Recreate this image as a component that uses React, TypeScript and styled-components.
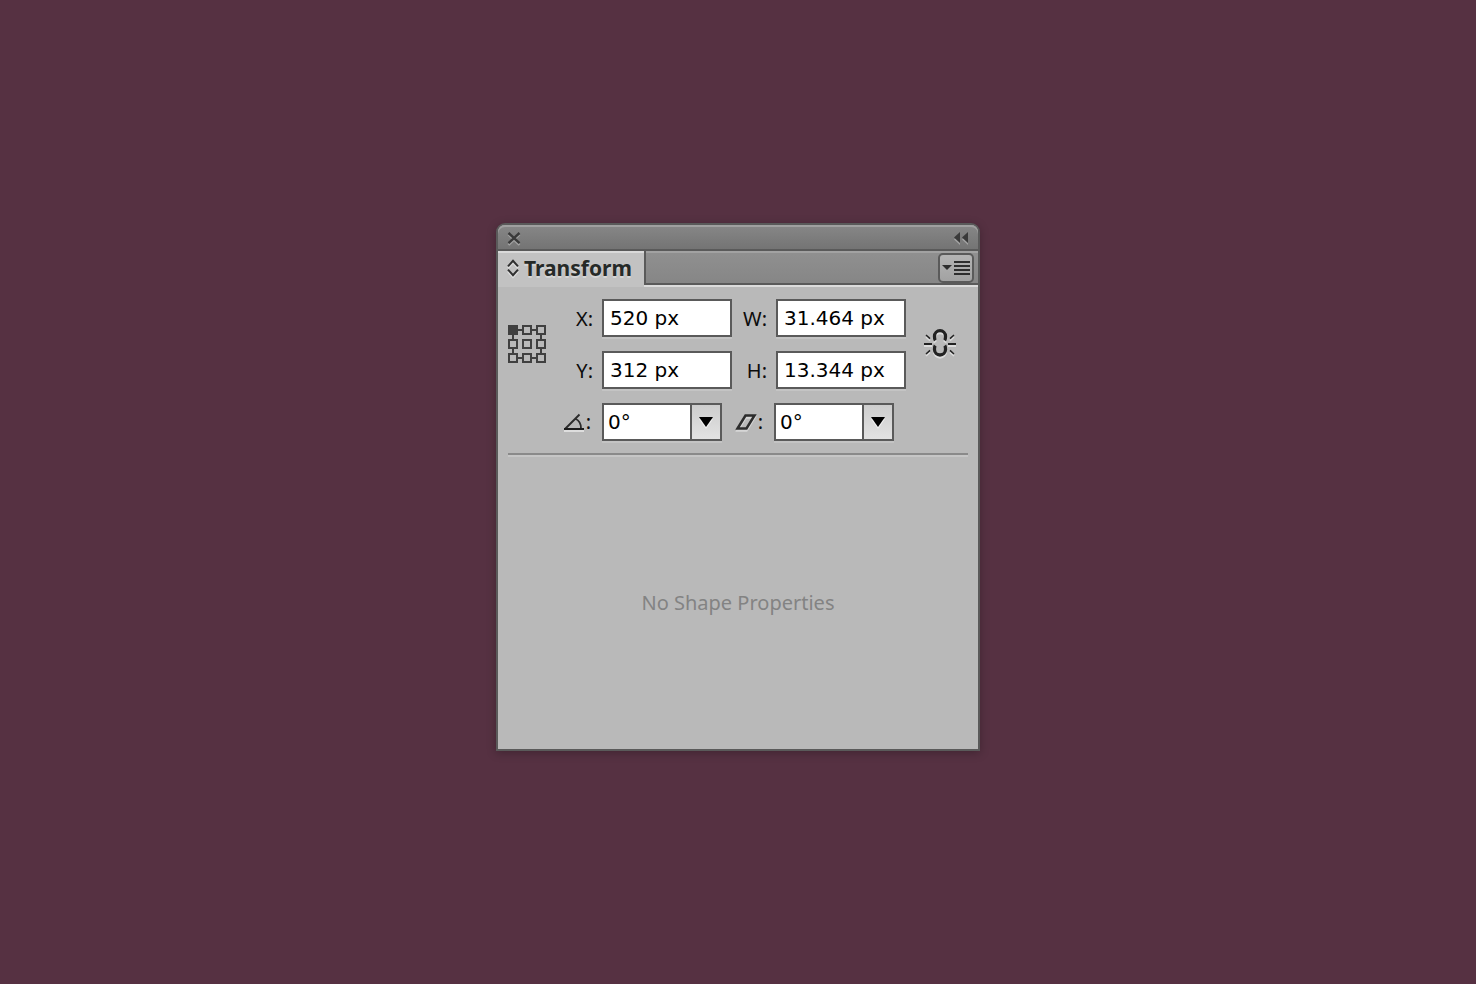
import React, { useState } from 'react';
import styled, { createGlobalStyle } from 'styled-components';

const EDGE = '#5a5a5a';
const LABEL_FONT = '"Noto Sans", "Open Sans", sans-serif';
const VALUE_FONT = '"DejaVu Sans", Verdana, sans-serif';

const GlobalStyle = createGlobalStyle`
  * { box-sizing: border-box; }
  body { margin: 0; background: #563142; }
  button, input, select { font: inherit; color: inherit; margin: 0; }
  svg { display: block; flex: none; overflow: visible; }
`;

const Stage = styled.main`
  min-height: 100vh;
  display: flex;
  align-items: center;
  justify-content: center;
  padding: 16px 16px 26px;
  font-family: ${LABEL_FONT};
  font-size: 20px;
  line-height: 24px;
  color: #0c0c0c;
`;

const Panel = styled.section`
  width: 100%;
  max-width: 484px;
  border: 2px solid ${EDGE};
  border-radius: 9px 9px 0 0;
  background: #b9b9b9;
  box-shadow: 0 2px 10px rgba(0, 0, 0, 0.25);
`;

const TitleBar = styled.header`
  display: flex;
  align-items: center;
  justify-content: space-between;
  height: 26px;
  padding: 2px 9px 0 8px;
  border-bottom: 2px solid ${EDGE};
  border-radius: 7px 7px 0 0;
  background: linear-gradient(#878787, #747474);
  box-shadow: inset 0 2px 0 #a0a0a0;
`;

const IconButton = styled.button`
  display: flex;
  padding: 0;
  border: 0;
  background: none;
  cursor: pointer;
`;

const TabBar = styled.div`
  display: flex;
  height: 36px;
`;

const Tab = styled.button`
  display: flex;
  align-items: center;
  gap: 5px;
  width: 146px;
  height: 36px;
  padding: 0 0 2px 9px;
  border: 0;
  background: #c2c2c2;
  box-shadow: inset 0 2px 0 #dadada;
  color: #262a28;
  font-size: 21px;
  font-weight: 700;
  text-shadow: 0 2px 0 #d6d6d6;
`;

const TabStrip = styled.div`
  flex: 1;
  display: flex;
  align-items: flex-end;
  justify-content: flex-end;
  height: 34px;
  padding-right: 4px;
  border-left: 2px solid ${EDGE};
  border-bottom: 2px solid ${EDGE};
  background: linear-gradient(#909090, #868686);
  box-shadow: inset 0 2px 0 #a2a2a2, 0 2px 0 #dcdcdc;
`;

const MenuButton = styled(IconButton)`
  align-items: center;
  justify-content: center;
  width: 36px;
  height: 30px;
  border: 2px solid ${EDGE};
  border-radius: 5px;
  background: linear-gradient(#b4b4b4, #a2a2a2);
`;

const Fields = styled.form`
  display: flex;
  margin: 0 10px;
  padding: 12px 0;
  border-bottom: 2px solid #8a8a8a;
  box-shadow: 0 2px 0 #c6c6c6;
`;

const SideColumn = styled.div`
  display: flex;
  align-items: center;
  height: 90px;
`;

const Rows = styled.div`
  display: flex;
  flex-direction: column;
  gap: 14px;
  margin: 0 17px 0 12px;
`;

const Row = styled.div`
  display: flex;
  align-items: center;
`;

const Label = styled.label<{ $width: number }>`
  display: flex;
  align-items: center;
  justify-content: flex-end;
  flex: none;
  width: ${(p) => p.$width}px;
  padding: 2px 9px 0 0;
`;

const IconLabel = styled(Label)`
  gap: 1px;
  padding: 0 11px 0 0;
`;

const TextBox = styled.input`
  width: 130px;
  height: 38px;
  padding: 0 6px;
  border: 2px solid ${EDGE};
  border-radius: 0;
  outline: 0;
  background: #fff;
  box-shadow: 0 2px 0 #c4c4c4;
  color: #000;
  font-family: ${VALUE_FONT};
`;

const SelectFrame = styled.div`
  position: relative;
  width: 120px;
  height: 38px;
  border: 2px solid ${EDGE};
  background: #fff;
  box-shadow: 0 2px 0 #c4c4c4;
`;

const Select = styled.select`
  appearance: none;
  display: block;
  width: 100%;
  height: 34px;
  padding: 0 32px 0 4px;
  border: 0;
  border-radius: 0;
  outline: 0;
  background: transparent;
  color: #000;
  font-family: ${VALUE_FONT};
`;

const SelectArrow = styled.span`
  position: absolute;
  top: 0;
  right: 0;
  bottom: 0;
  display: flex;
  align-items: center;
  justify-content: center;
  width: 30px;
  border-left: 2px solid ${EDGE};
  background: linear-gradient(#cdcdcd, #e2e2e2);
  pointer-events: none;
`;

const Empty = styled.p`
  display: flex;
  align-items: center;
  justify-content: center;
  min-height: 292px;
  margin: 2px 0 0;
  color: #838383;
`;

const CloseIcon = () => (
  <svg width="16" height="16" viewBox="0 0 16 16" fill="none" strokeWidth="2.4">
    <path d="M2.5 4.5 13.5 15M13.5 4.5 2.5 15" stroke="#a2a2a2" />
    <path d="M2.5 3 13.5 13.2M13.5 3 2.5 13.2" stroke="#3a3a3a" />
  </svg>
);

const CollapseIcon = () => (
  <svg width="16" height="14" viewBox="0 0 16 14">
    <path d="M7 3v11L1 8.5zM15 3v11L9 8.5z" fill="#a2a2a2" />
    <path d="M7 1v11L1 6.5zM15 1v11L9 6.5z" fill="#3a3a3a" />
  </svg>
);

const SortIcon = () => (
  <svg width="12" height="18" viewBox="0 0 12 18" fill="none" strokeWidth="2">
    <path d="M1 9.2 6 3.6l5 5.6M1 12.4 6 18l5-5.6" stroke="#dedede" />
    <path d="M1 7.4 6 1.8l5 5.6M1 10.6 6 16.2l5-5.6" stroke="#2f2f2f" />
  </svg>
);

const MenuIcon = () => (
  <svg width="28" height="16" viewBox="0 0 28 16">
    <path d="M0 5h10L5 10z" fill="#2e2e2e" />
    <path d="M12 2h16M12 6h16M12 10h16M12 14h16" stroke="#2e2e2e" strokeWidth="2" />
  </svg>
);

const points = [1, 15, 29];

const ReferenceIcon = () => (
  <svg width="38" height="38" viewBox="0 0 38 38" fill="none" stroke="#404040" strokeWidth="2">
    <path d="M10 5h4m10 0h4M10 33h4m10 0h4M5 10v4m0 10v4M33 10v4m0 10v4" />
    {points.map((y) =>
      points.map((x) => (
        <rect key={`${x}-${y}`} x={x} y={y} width="8" height="8" fill={x + y === 2 ? '#404040' : 'none'} />
      )),
    )}
  </svg>
);

const linkShape =
  'M12.2 12.5Q11.5 11.500 11.5 8.2a5.5 5.5 0 0 1 11 0Q22.500 11.500 21.8 12.5M12.2 17.500Q11.5 18.500 11.5 21.5a5.5 5.5 0 0 0 11 0Q22.500 18.500 21.8 17.500';
const linkRays = 'M3 7l4 3.6M31 7l-4 3.6M3 26l4-3.6M31 26l-4-3.6';

const LinkIcon = () => (
  <svg width="34" height="32" viewBox="0 0 34 32" fill="none">
    <g stroke="#dcdcdc" transform="translate(0 2)">
      <path d={linkShape} strokeWidth="3.3" />
      <path d={linkRays} strokeWidth="1.5" />
      <path d="M1 16h8M25 16h8" strokeWidth="2" />
    </g>
    <g stroke="#222">
      <path d={linkShape} strokeWidth="3.3" />
      <path d={linkRays} strokeWidth="1.5" />
      <path d="M1 16h8M25 16h8" strokeWidth="2" />
    </g>
  </svg>
);

const AngleIcon = () => (
  <svg width="21" height="18" viewBox="0 0 21 18" fill="none">
    <path d="M0 18h20" stroke="#dedede" strokeWidth="2" />
    <path d="M1 16 15.5 1.5M11 5.5q6.5 3 6 10.5" stroke="#2c2c2c" strokeWidth="1.9" />
    <path d="M0 16h20" stroke="#1c1c1c" strokeWidth="2" />
  </svg>
);

const ShearIcon = () => (
  <svg width="22" height="18" viewBox="0 0 22 18" fill="none" strokeWidth="2.5">
    <path d="M2.5 17.5 10.5 4.5h9l-8 13z" stroke="#d6d6d6" />
    <path d="M2.5 15.5 10.5 2.5h9l-8 13z" stroke="#2c2c2c" />
  </svg>
);

const ArrowIcon = () => (
  <svg width="14" height="12" viewBox="0 0 14 12">
    <path d="M0 3h14L7 13z" fill="#f0f0f0" />
    <path d="M0 1h14L7 11z" fill="#000" />
  </svg>
);

type TextFieldProps = { id: string; name: string; initial: string };

const TextField = ({ id, name, initial }: TextFieldProps) => {
  const [value, setValue] = useState(initial);
  return (
    <>
      <Label htmlFor={id} $width={44}>{name}:</Label>
      <TextBox id={id} value={value} onChange={(e) => setValue(e.target.value)} />
    </>
  );
};

type AngleFieldProps = { id: string; name: string; labelWidth: number; icon: React.ReactNode };

const AngleField = ({ id, name, labelWidth, icon }: AngleFieldProps) => (
  <>
    <IconLabel htmlFor={id} $width={labelWidth}>{icon}:</IconLabel>
    <SelectFrame>
      <Select id={id} aria-label={name} defaultValue="0">
        {[0, 30, 45, 60, 90].map((deg) => (
          <option key={deg} value={deg}>{deg}°</option>
        ))}
      </Select>
      <SelectArrow><ArrowIcon /></SelectArrow>
    </SelectFrame>
  </>
);

export default function App() {
  return (
    <>
      <GlobalStyle />
      <Stage>
        <Panel aria-label="Transform">
          <TitleBar>
            <IconButton type="button" aria-label="Close"><CloseIcon /></IconButton>
            <IconButton type="button" aria-label="Collapse"><CollapseIcon /></IconButton>
          </TitleBar>
          <TabBar>
            <Tab type="button"><SortIcon />Transform</Tab>
            <TabStrip>
              <MenuButton type="button" aria-label="Panel menu"><MenuIcon /></MenuButton>
            </TabStrip>
          </TabBar>
          <Fields onSubmit={(e) => e.preventDefault()}>
            <SideColumn>
              <IconButton type="button" aria-label="Reference point"><ReferenceIcon /></IconButton>
            </SideColumn>
            <Rows>
              <Row>
                <TextField id="x" name="X" initial="520 px" />
                <TextField id="w" name="W" initial="31.464 px" />
              </Row>
              <Row>
                <TextField id="y" name="Y" initial="312 px" />
                <TextField id="h" name="H" initial="13.344 px" />
              </Row>
              <Row>
                <AngleField id="rotate" name="Rotate" labelWidth={44} icon={<AngleIcon />} />
                <AngleField id="shear" name="Shear" labelWidth={52} icon={<ShearIcon />} />
              </Row>
            </Rows>
            <SideColumn>
              <IconButton type="button" aria-label="Constrain proportions"><LinkIcon /></IconButton>
            </SideColumn>
          </Fields>
          <Empty>No Shape Properties</Empty>
        </Panel>
      </Stage>
    </>
  );
}
